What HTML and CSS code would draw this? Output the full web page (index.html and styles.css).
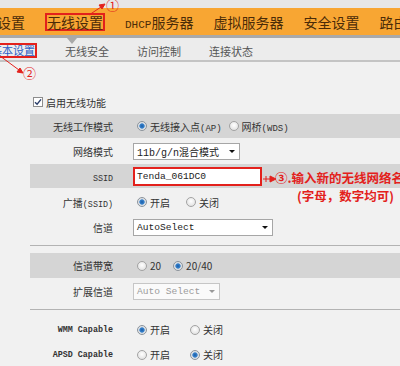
FILE: index.html
```html
<!DOCTYPE html>
<html lang="zh-CN">
<head>
    <meta charset="UTF-8">
    <meta name="viewport" content="width=device-width, initial-scale=1.0">
    <title>无线设置</title>
    <link rel="stylesheet" href="styles.css">
</head>
<body>
<div class="top-strip"></div>

<div class="main-nav">
    <span class="nav-item first">设置</span>
    <span class="nav-item active"><span class="mark">无线设置</span></span>
    <span class="nav-item"><span class="en">DHCP</span>服务器</span>
    <span class="nav-item">虚拟服务器</span>
    <span class="nav-item">安全设置</span>
    <span class="nav-item">路由设置</span>
</div>

<div class="sub-nav">
    <span class="sub-item current">基本设置</span>
    <span class="sub-item">无线安全</span>
    <span class="sub-item">访问控制</span>
    <span class="sub-item">连接状态</span>
</div>

<div class="content">
    <div class="enable">
        <span class="checkbox">
            <svg width="8" height="8" viewBox="0 0 8 8"><path d="M1 4.2 L3.1 6.3 L7 1.4" fill="none" stroke="#2b3f6b" stroke-width="1.4"/></svg>
        </span>
        启用无线功能
    </div>

    <div class="row shade short">
        <div class="label">无线工作模式</div>
        <div class="field gap-xs">
            <span class="opt"><span class="radio on"></span><span>无线接入点<span class="en">(AP)</span></span></span>
            <span class="opt"><span class="radio"></span><span>网桥<span class="en">(WDS)</span></span></span>
        </div>
    </div>
    <div class="row tall">
        <div class="label">网络模式</div>
        <div class="field">
            <span class="select mode"><span>11b/g/n混合模式</span></span>
        </div>
    </div>
    <div class="row shade short">
        <div class="label"><span class="en">SSID</span></div>
        <div class="field">
            <span class="input">Tenda_061DC0</span>
        </div>
    </div>
    <div class="row wide">
        <div class="label">广播<span class="en">(SSID)</span></div>
        <div class="field">
            <span class="opt"><span class="radio on"></span><span>开启</span></span>
            <span class="opt"><span class="radio"></span><span>关闭</span></span>
        </div>
    </div>
    <div class="row compact">
        <div class="label">信道</div>
        <div class="field">
            <span class="select channel"><span class="mono">AutoSelect</span></span>
        </div>
    </div>

    <div class="divider"></div>

    <div class="row shade">
        <div class="label">信道带宽</div>
        <div class="field gap-s">
            <span class="opt"><span class="radio"></span><span>20</span></span>
            <span class="opt"><span class="radio on"></span><span>20/40</span></span>
        </div>
    </div>
    <div class="row tall">
        <div class="label">扩展信道</div>
        <div class="field">
            <span class="select ext disabled"><span class="mono">Auto Select</span></span>
        </div>
    </div>

    <div class="divider second"></div>

    <div class="row">
        <div class="label cap">WMM Capable</div>
        <div class="field gap-l">
            <span class="opt"><span class="radio on"></span><span>开启</span></span>
            <span class="opt"><span class="radio"></span><span>关闭</span></span>
        </div>
    </div>
    <div class="row">
        <div class="label cap">APSD Capable</div>
        <div class="field gap-l">
            <span class="opt"><span class="radio"></span><span>开启</span></span>
            <span class="opt"><span class="radio on"></span><span>关闭</span></span>
        </div>
    </div>
</div>

<!-- red annotations drawn over the screenshot -->
<svg class="arrows" width="400" height="366" viewBox="0 0 400 366">
    <g stroke="#e3211c" stroke-width="1" fill="#e3211c">
        <line x1="89" y1="15" x2="101" y2="7"/>
        <path d="M105 4 L99 5 L102 9 Z"/>
        <line x1="0" y1="56" x2="19" y2="70"/>
        <path d="M23 73 L17 72 L20 68 Z"/>
        <line x1="263" y1="179" x2="270" y2="179"/>
        <line x1="266" y1="176" x2="266" y2="182"/>
        <path d="M276 179 L270 176 L270 182 Z"/>
    </g>
</svg>
<span class="num n1">①</span>
<span class="num n2">②</span>
<div class="note">
    <div>③.输入新的无线网络名称</div>
    <div class="sub">(字母，数字均可)</div>
</div>
</body>
</html>
```

FILE: styles.css
```css
body {
    margin: 0;
    width: 400px;
    height: 366px;
    overflow: hidden;
    position: relative;
    background-color: #f1f1f1;
    font-family: "Noto Sans CJK SC", sans-serif;
    color: #333;
}

.top-strip {
    height: 8px;
    background-color: #e7e7e7;
}

.main-nav {
    height: 27px;
    display: flex;
    align-items: center;
    gap: 20px;
    background-color: #f8a633;
    border-bottom: 3px solid #a9a9a9;
    font-size: 14px;
    color: #4a2b08;
    white-space: nowrap;
}

.nav-item.first {
    margin-left: -3px;
}

.main-nav .en {
    font-family: "Liberation Mono", monospace;
    font-size: 11px;
}

.mark {
    position: relative;
    display: inline-block;
    line-height: 14px;
    border: 2px solid #e3211c;
}

/* pointer under the active tab */
.mark::after {
    content: "";
    position: absolute;
    left: 20px;
    top: 23px;
    border-top: 6px solid #a9a9a9;
    border-left: 5px solid transparent;
    border-right: 5px solid transparent;
}

.sub-nav {
    height: 24px;
    box-sizing: border-box;
    padding-top: 3px;
    display: flex;
    align-items: center;
    gap: 28px;
    background-color: #ececec;
    border-bottom: 2px solid #c4c4c4;
    font-size: 11px;
    color: #555;
    white-space: nowrap;
}

.sub-item.current {
    margin-left: -11px;
    line-height: 11px;
    border: 2px solid #e3211c;
    color: #2c5cc5;
}

.content {
    padding-top: 33px;
}

.enable {
    display: flex;
    align-items: center;
    gap: 3px;
    height: 14px;
    margin: 0 0 5px 33px;
    font-size: 10px;
}

.checkbox {
    width: 10px;
    height: 10px;
    box-sizing: border-box;
    border: 1px solid #8d8d8d;
    background-color: #fff;
    display: flex;
    align-items: center;
    justify-content: center;
}

.row {
    display: grid;
    grid-template-columns: 83px 1fr;
    column-gap: 20px;
    align-items: center;
    height: 25px;
    margin-left: 30px;
    font-size: 10px;
    white-space: nowrap;
}

.row.shade { background-color: #d5d5d5; }
.row.short { height: 24px; }
.row.tall { height: 26px; }
.row.wide { height: 28px; }
.row.compact { height: 22px; }

.label {
    text-align: right;
    color: #333;
}

.label .en {
    font-family: "Liberation Mono", monospace;
    font-size: 8.4px;
}

.label.cap {
    font-family: "Liberation Mono", monospace;
    font-size: 8.4px;
    font-weight: bold;
}

.field {
    display: flex;
    align-items: center;
}

.field .en {
    font-family: "Liberation Mono", monospace;
    font-size: 9px;
}

.opt {
    display: flex;
    align-items: center;
    margin-right: 12px;
}

.gap-xs .opt { margin-right: 3px; }
.gap-s .opt { margin-right: 8px; }
.gap-l .opt { margin-right: 16px; }

.radio {
    flex: none;
    width: 10px;
    height: 10px;
    box-sizing: border-box;
    margin: 0 3px 0 4px;
    border-radius: 50%;
    border: 1px solid #a3a3a3;
    background: radial-gradient(circle at 50% 40%, #ffffff, #dadada);
}

.radio.on {
    border-color: #8b939b;
    background: radial-gradient(circle, #1a5ca6 0, #3a85cf 2.3px, #d9dde2 3px, #f2f2f2 100%);
}

.select {
    display: flex;
    align-items: center;
    justify-content: space-between;
    box-sizing: border-box;
    height: 17px;
    padding: 0 4px 0 3px;
    border: 1px solid #a6a6a6;
    background-color: #fff;
    font-family: "Liberation Mono", "Noto Sans CJK SC", monospace;
    font-size: 10px;
    color: #222;
}

.select::after {
    content: "";
    border-top: 3px solid #111;
    border-left: 3px solid transparent;
    border-right: 3px solid transparent;
}

.select .mono { font-size: 9.6px; }

.select.mode { width: 107px; }
.select.channel { width: 140px; }
.select.ext { width: 87px; }

.select.disabled {
    border-color: #c6c6c6;
    background-color: #fafafa;
    color: #9a9a9a;
}

.select.disabled::after {
    border-top-color: #999;
}

.input {
    box-sizing: border-box;
    width: 129px;
    height: 19px;
    padding-left: 2px;
    display: flex;
    align-items: center;
    border: 2px solid #e3211c;
    background-color: #fff;
    font-family: "Liberation Mono", monospace;
    font-size: 9.6px;
    color: #222;
}

.divider {
    margin: 7px 0 7px 30px;
    border-top: 1px solid #b3b3b3;
}

.divider.second {
    margin-top: 5px;
}

.arrows {
    position: absolute;
    left: 0;
    top: 0;
}

.num {
    position: absolute;
    font-size: 13px;
    line-height: 14px;
    color: #e3211c;
}

.n1 { left: 106px; top: -2px; }
.n2 { left: 23px; top: 66px; }

.note {
    position: absolute;
    left: 275px;
    top: 169px;
    font-size: 12.5px;
    font-weight: bold;
    line-height: 18px;
    color: #e3211c;
    white-space: nowrap;
}

.note .sub {
    padding-left: 22px;
}
```
